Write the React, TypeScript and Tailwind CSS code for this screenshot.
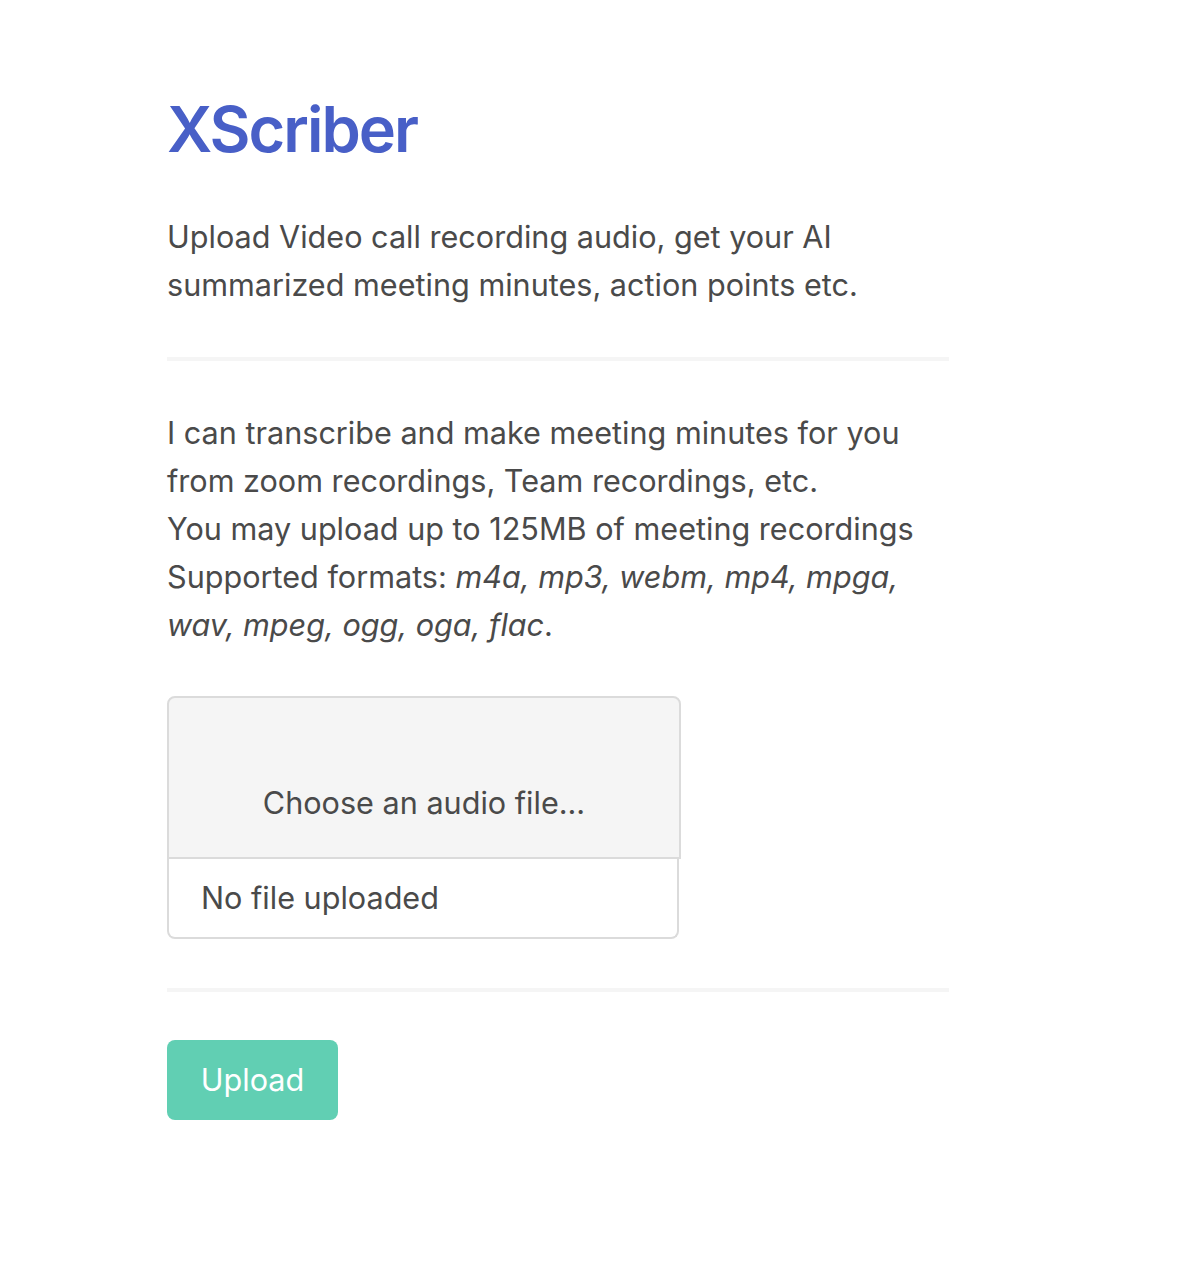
import React from 'react';

export default function App() {
  return (
    <div
      className="min-h-screen bg-white text-[#4a4a4a]"
      style={{ fontFamily: 'Inter, "Liberation Sans", sans-serif' }}
    >
      <div className="pl-[167px] pt-[93px] w-[949px]">
        <h1 className="text-[63px] leading-[72px] font-semibold text-[#485fc7] mb-[48px] tracking-[-2px]">
          XScriber
        </h1>

        <p className="text-[30.6px] leading-[48px]">
          Upload Video call recording audio, get your AI
          <br />
          summarized meeting minutes, action points etc.
        </p>

        <hr className="my-[48px] h-[4px] bg-[#f5f5f5] border-0" />

        <p className="text-[30.6px] leading-[48px]">
          I can transcribe and make meeting minutes for you
          <br />
          from zoom recordings, Team recordings, etc.
          <br />
          You may upload up to 125MB of meeting recordings
          <br />
          Supported formats: <em>m4a, mp3, webm, mp4, mpga,</em>
          <br />
          <em>wav, mpeg, ogg, oga, flac</em>.
        </p>

        {/* file picker, boxed with name */}
        <label className="mt-[47px] flex flex-col items-start cursor-pointer">
          <div className="w-[514px] h-[163px] bg-[#f5f5f5] border-2 border-[#dbdbdb] rounded-t-[8px] pt-[81px] text-center text-[30.6px] leading-[48px]">
            Choose an audio file...
          </div>
          <div className="w-[512px] h-[80px] border-2 border-t-0 border-[#dbdbdb] rounded-b-[8px] pl-[32px] pt-[15px] text-[30.6px] leading-[48px]">
            No file uploaded
          </div>
        </label>

        <hr className="mt-[49px] mb-[48px] h-[4px] bg-[#f5f5f5] border-0" />

        <button className="w-[171px] h-[80px] rounded-[8px] bg-[#61cfb3] text-white text-[30.6px] leading-[48px]">
          Upload
        </button>
      </div>
    </div>
  );
}
